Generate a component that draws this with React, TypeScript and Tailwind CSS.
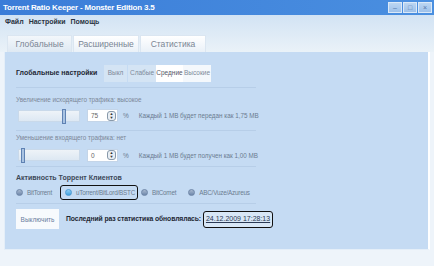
import React from 'react';

const font = { fontFamily: '"Liberation Sans", Arial, sans-serif' };

const Separator = () => <div className="h-px w-[240px] bg-[#b7cee8]" />;

const Slider = ({ pos }: { pos: number }) => (
  <div className="relative h-[12px] w-[62px] border border-[#c9d9ea] bg-gradient-to-b from-[#eef3f8] to-[#dde8f3]">
    <div
      className="absolute top-[-2px] h-[15px] w-[4px] border border-[#5f82b3] bg-[#a9c3e2]"
      style={{ left: pos }}
    />
  </div>
);

const Spin = ({ value }: { value: string }) => (
  <div className="flex h-[13px] w-[31px] items-center justify-between border border-[#c4d5e8] bg-white pl-[3px] pr-[1px]">
    <span className="text-[6.5px] text-[#666]">{value}</span>
    <div className="flex h-[10px] w-[9px] flex-col items-center justify-center rounded-[3px] border border-[#8899aa] bg-[#e8eef4]">
      <span className="text-[4px] leading-[4px] text-[#333]">▲</span>
      <span className="text-[4px] leading-[4px] text-[#333]">▼</span>
    </div>
  </div>
);

const Radio = ({ label, on }: { label: string; on?: boolean }) => (
  <div className="flex items-center gap-[4px]">
    <div
      className={
        on
          ? 'h-[7px] w-[7px] rounded-full border border-[#4c9bd3] bg-gradient-to-b from-[#8fd0f5] to-[#3f9fdc]'
          : 'h-[7px] w-[7px] rounded-full border border-[#6d85a6] bg-gradient-to-b from-[#a7b8cf] to-[#6f88ab]'
      }
    />
    <span className="text-[6.3px] tracking-[-0.2px] text-[#6b7c91]">{label}</span>
  </div>
);

export default function App() {
  return (
    <div className="h-[266px] w-[434px] overflow-hidden bg-[#eef4fa]" style={font}>
      {/* title bar */}
      <div className="flex h-[15px] items-center justify-between bg-gradient-to-r from-[#3b7dd8] to-[#4a8fe0] pl-[3px] pr-[2px]">
        <span className="text-[8px] font-bold tracking-[-0.2px] text-white">
          Torrent Ratio Keeper - Monster Edition 3.5
        </span>
        <div className="flex gap-px">
          {['–', '□', '×'].map((s) => (
            <div
              key={s}
              className="flex h-[11px] w-[14px] items-center justify-center border border-[#dbe9f8] bg-gradient-to-b from-[#bcd6f2] to-[#9dc1ea] text-[7px] leading-none text-[#5577aa]"
            >
              {s}
            </div>
          ))}
        </div>
      </div>

      {/* menu + tabs */}
      <div className="bg-gradient-to-b from-[#d2e3f4] to-[#eaf2f8]">
        <div className="flex h-[13px] items-center gap-[5px] pl-[5px] pt-[2px] text-[7px] font-bold text-[#2a3442]">
          <span>Файл</span>
          <span>Настройки</span>
          <span>Помощь</span>
        </div>
        <div className="flex h-[24px] items-end pl-[7px]">
          {['Глобальные', 'Расширенные', 'Статистика'].map((t, i) => (
            <div
              key={t}
              className={
                'mr-px flex h-[17px] items-center justify-center border border-b-0 border-[#dbe6f1] text-[8.5px] text-[#7a8594] ' +
                (i === 0
                  ? 'w-[65px] bg-gradient-to-b from-[#f3f7fb] to-[#dfe9f3]'
                  : 'w-[66px] bg-gradient-to-b from-[#ffffff] to-[#eaf1f8]')
              }
            >
              {t}
            </div>
          ))}
        </div>
      </div>

      {/* panel */}
      <div className="ml-[4px] mr-[4px] h-[198px] border-b border-l border-r-2 border-[#e4eef8] border-r-white bg-[#c5dbf3] pl-[11px] pt-[12px]">
        <div className="flex h-[18px] items-center">
          <span className="w-[88px] text-[7px] font-bold text-[#1e2733]">Глобальные настройки</span>
          <div className="flex h-[17px] text-[6.5px] text-[#7d8a99]">
            <div className="flex w-[23px] items-center justify-center bg-[#d4e4f4]">Выкл</div>
            <div className="ml-px flex w-[28px] items-center justify-center bg-[#d4e4f4]">Слабые</div>
            <div className="flex w-[27px] items-center justify-center bg-white text-[#556]">Средние</div>
            <div className="flex w-[28px] items-center justify-center bg-[#f4f8fc]">Высокие</div>
          </div>
        </div>
        <div className="mt-[5px]">
          <Separator />
        </div>

        <div className="mt-[7px] text-[6.3px] text-[#7b8797]">Увеличение исходящего трафика: высокое</div>
        <div className="mt-[5px] flex items-center pl-[2px]">
          <Slider pos={43} />
          <div className="ml-[7px]">
            <Spin value="75" />
          </div>
          <span className="ml-[5px] text-[6.5px] text-[#6b7c91]">%</span>
          <span className="ml-[10px] text-[6.3px] text-[#6b7c91]">Каждый 1 MB будет передан как 1,75 MB</span>
        </div>
        <div className="mt-[8px]">
          <Separator />
        </div>

        <div className="mt-[2px] text-[6.3px] text-[#7b8797]">Уменьшение входящего трафика: нет</div>
        <div className="mt-[6px] flex items-center pl-[2px]">
          <Slider pos={2} />
          <div className="ml-[7px]">
            <Spin value="0" />
          </div>
          <span className="ml-[5px] text-[6.5px] text-[#6b7c91]">%</span>
          <span className="ml-[10px] text-[6.3px] text-[#6b7c91]">Каждый 1 MB будет получен как 1,00 MB</span>
        </div>
        <div className="mt-[4px]">
          <Separator />
        </div>

        <div className="mt-[6px] text-[7px] font-bold text-[#3c4858]">Активность Торрент Клиентов</div>
        <div className="mt-[2px] flex h-[15px] items-center">
          <Radio label="BitTorrent" />
          <div className="ml-[8px] flex h-[15px] w-[78px] items-center rounded-[3px] border-[1.5px] border-[#111] pl-[4px]">
            <Radio label="uTorrent/BitLord/BSTC" on />
          </div>
          <div className="ml-[3px]">
            <Radio label="BitComet" />
          </div>
          <div className="ml-[12px]">
            <Radio label="ABC/Vuze/Azureus" />
          </div>
        </div>
        <div className="mt-[3px]">
          <Separator />
        </div>

        <div className="mt-[5px] flex items-center">
          <div className="flex h-[20px] w-[43px] items-center justify-center bg-[#f7fafd] text-[6.5px] text-[#6a7ea0]">
            Выключить
          </div>
          <span className="ml-[7px] text-[6.8px] font-bold tracking-[-0.1px] text-[#1e2733]">
            Последний раз статистика обновлялась:
          </span>
          <div className="ml-[2px] flex h-[17px] w-[70px] items-center justify-center rounded-[3px] border-[1.5px] border-[#111] bg-[#d8e7f6] text-[7px] text-[#2b3a55] underline">
            24.12.2009 17:28:13
          </div>
        </div>
      </div>
    </div>
  );
}
